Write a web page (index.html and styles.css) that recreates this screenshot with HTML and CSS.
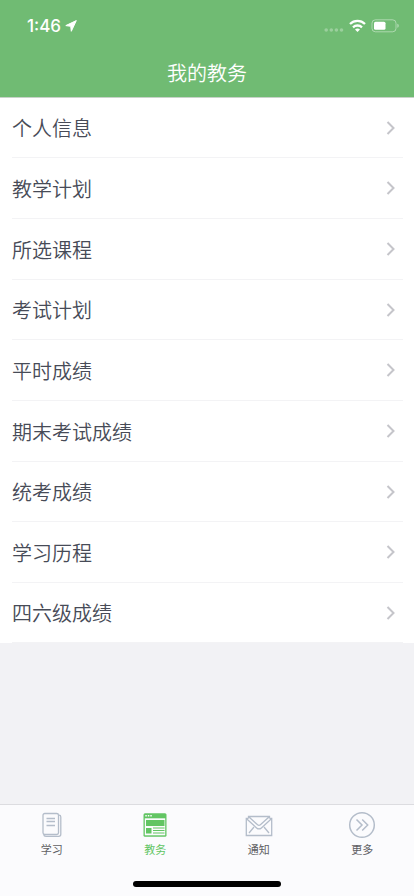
FILE: index.html
```html
<!DOCTYPE html>
<html lang="zh-CN">
<head>
<meta charset="utf-8">
<meta name="viewport" content="width=device-width, initial-scale=1">
<title>我的教务</title>
<link rel="stylesheet" href="styles.css">
</head>
<body>
<div class="app">
  <header class="header">
    <div class="status">
      <div class="status-left">
        <span class="time">1:46</span>
        <svg class="locate" width="12" height="12" viewBox="0 0 12 12" aria-hidden="true"><path d="M11.300.6 6.300 11.300 5.700 6.300.8 5.600z" fill="#fff" stroke="#fff" stroke-linejoin="round"/></svg>
      </div>
      <div class="status-right">
        <svg width="20" height="14" viewBox="0 0 20 14" aria-hidden="true"><g fill="#fff" fill-opacity=".3"><circle cx="2.200" cy="11" r="1.800"/><circle cx="7.300" cy="11" r="1.800"/><circle cx="12.400" cy="11" r="1.800"/><circle cx="17.500" cy="11" r="1.800"/></g></svg>
        <svg width="17" height="14" viewBox="0 0 17 14" aria-hidden="true"><g fill="none" stroke="#fff" stroke-width="2.300"><path d="M1 5a10.800 10.800 0 0 1 15 0"/><path d="M4 8.300a6.500 6.500 0 0 1 9 0"/></g><path d="M8.500 13 6 10.600a3.600 3.600 0 0 1 5 0z" fill="#fff"/></svg>
        <svg width="28" height="14" viewBox="0 0 28 14" aria-hidden="true"><rect x="1" y=".8" width="24" height="12" rx="3.400" fill="none" stroke="#fff" stroke-opacity=".42"/><rect x="3" y="2.800" width="11.500" height="8" rx="1.500" fill="#fff"/><path d="M26.300 4.800c2 .8 2 3.200 0 4z" fill="#fff" fill-opacity=".45"/></svg>
      </div>
    </div>
    <h1 class="title">我的教务</h1>
  </header>
  <main class="content">
    <ul class="list">
      <li><a href="#info"><span>个人信息</span><svg class="chevron" viewBox="0 0 10 16"><path d="m1.500 2 6 6-6 6"/></svg></a></li>
      <li><a href="#plan"><span>教学计划</span><svg class="chevron" viewBox="0 0 10 16"><path d="m1.500 2 6 6-6 6"/></svg></a></li>
      <li><a href="#courses"><span>所选课程</span><svg class="chevron" viewBox="0 0 10 16"><path d="m1.500 2 6 6-6 6"/></svg></a></li>
      <li><a href="#exams"><span>考试计划</span><svg class="chevron" viewBox="0 0 10 16"><path d="m1.500 2 6 6-6 6"/></svg></a></li>
      <li><a href="#usual"><span>平时成绩</span><svg class="chevron" viewBox="0 0 10 16"><path d="m1.500 2 6 6-6 6"/></svg></a></li>
      <li><a href="#final"><span>期末考试成绩</span><svg class="chevron" viewBox="0 0 10 16"><path d="m1.500 2 6 6-6 6"/></svg></a></li>
      <li><a href="#unified"><span>统考成绩</span><svg class="chevron" viewBox="0 0 10 16"><path d="m1.500 2 6 6-6 6"/></svg></a></li>
      <li><a href="#history"><span>学习历程</span><svg class="chevron" viewBox="0 0 10 16"><path d="m1.500 2 6 6-6 6"/></svg></a></li>
      <li><a href="#cet"><span>四六级成绩</span><svg class="chevron" viewBox="0 0 10 16"><path d="m1.500 2 6 6-6 6"/></svg></a></li>
    </ul>
  </main>
  <footer class="footer">
    <nav class="tabs">
      <a class="tab" href="#study">
        <svg width="28" height="28" viewBox="0 0 28 28" aria-hidden="true"><g fill="none" stroke="#b4bdca" stroke-width="1.300"><rect x="5" y="2.500" width="15.500" height="21" rx="1.800"/><path d="M20.500 4.200H21q1.800 0 1.800 1.800v17.300q0 2-2 2H8q-2 0-2.400-2M8.500 7.500h8.500M8.500 10.500h8.500M8.500 14.500h8.500"/></g></svg>
        <span>学习</span>
      </a>
      <a class="tab active" href="#academic" aria-current="page">
        <svg width="28" height="28" viewBox="0 0 28 28" aria-hidden="true"><path d="M4 2.300h20q1.500 0 1.500 1.500v20.400q0 1.500-1.500 1.500H4q-1.500 0-1.500-1.500V3.800q0-1.500 1.500-1.500z" fill="#62c563"/><path d="M3.800 7.300h20.400v17H3.800z" fill="#fbfbfd"/><g fill="#62c563"><path d="M5 9h18.500v6H5zM5 17h5.500v5.500H5z"/><path d="M12 16.500h11.500v1.100H12zM12 19h11.500v1.100H12zM12 21.500h11.500v1.100H12z"/></g><g fill="#fbfbfd"><path d="M4.300 4h1.500v1.500H4.300zM6.800 4h1.500v1.500H6.800zM9.300 4h1.500v1.500H9.300z"/></g></svg>
        <span>教务</span>
      </a>
      <a class="tab" href="#notice">
        <svg width="28" height="28" viewBox="0 0 28 28" aria-hidden="true"><g fill="none" stroke="#b4bdca" stroke-width="1.300"><path d="M3.500 7.300H1.300v17.200h25.400V7.300h-2.200"/><path d="m1.300 7.600 10.300 9.300q2.400 2 4.800 0l10.300-9.300"/><path d="M3.500 7.300V5.500h21v1.800M4 6l8.600 7.800q1.400 1.200 2.800 0L24 6M4 22l5-6M24 22l-5-6"/></g></svg>
        <span>通知</span>
      </a>
      <a class="tab" href="#more">
        <svg width="28" height="28" viewBox="0 0 28 28" aria-hidden="true"><g fill="none" stroke="#b4bdca" stroke-width="1.500"><circle cx="14" cy="14" r="12.300"/><path d="m8.500 8.500 5.500 5.500-5.500 5.500M14.200 8.500l5.500 5.500-5.500 5.500"/></g></svg>
        <span>更多</span>
      </a>
    </nav>
    <div class="home-bar"></div>
  </footer>
</div>
</body>
</html>
```
FILE: styles.css
```css
* { box-sizing: border-box; }

body {
  margin: 0;
  font-family: Inter, "Noto Sans CJK SC", sans-serif;
  background: #f2f2f5;
}

a { color: inherit; text-decoration: none; }

.app {
  display: flex;
  flex-direction: column;
  min-height: 100vh;
}

.header {
  background: #70bb73;
  border-bottom: 1px solid #c8d2c9;
  color: #fff;
}

.status {
  display: flex;
  justify-content: space-between;
  align-items: center;
  height: 48px;
  padding: 4px 15px 0 27px;
}

.status-left { display: flex; align-items: center; gap: 4px; }

.status-right { display: flex; align-items: center; gap: 5px; }

.time {
  font-size: 17px;
  line-height: 20px;
  font-weight: 500;
}

.title {
  margin: 0;
  padding: 12px 0 8px;
  text-align: center;
  font-size: 20px;
  line-height: 29px;
  font-weight: 350;
}

.content { flex: 1; }

.list {
  margin: 0;
  padding: 0 11px 0 12px;
  list-style: none;
  background: #fff;
}

.list a {
  display: flex;
  align-items: center;
  justify-content: space-between;
  min-height: 61px;
  padding-right: 7px;
  border-bottom: 1px solid #f3f3f5;
  color: #474b57;
  font-size: 20px;
  line-height: 30px;
  font-weight: 350;
}

/* Keeps the average row a little under 61px. */
.list li:nth-child(3n + 1) a,
.list li:last-child a { min-height: 60px; }

.list span { padding-top: 3px; }

.chevron {
  width: 10px;
  height: 16px;
  fill: none;
  stroke: #c5c5ca;
  stroke-width: 2;
}

.footer {
  background: #fbfbfd;
  border-top: 1px solid #dcdce0;
}

.tabs {
  display: grid;
  grid-template-columns: repeat(4, 1fr);
}

.tab {
  display: flex;
  flex-direction: column;
  align-items: center;
  padding-top: 6px;
  gap: 3px;
  color: #606064;
  font-size: 11px;
  line-height: 16px;
}

.tab.active { color: #62c563; }

.home-bar {
  width: 148px;
  height: 6px;
  margin: 23px auto 9px;
  border-radius: 3px;
  background: #000;
}
```
